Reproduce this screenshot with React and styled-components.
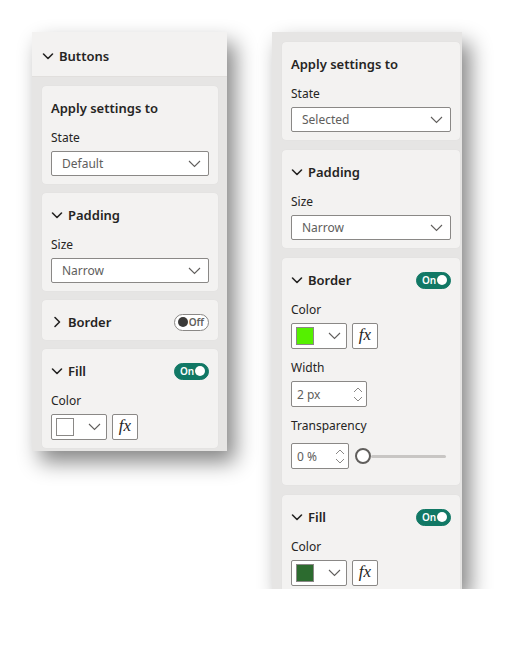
import React from "react";
import styled, { createGlobalStyle } from "styled-components";

const Global = createGlobalStyle`
  html, body {
    margin: 0;
    background: #ffffff;
    font-family: "Segoe UI", "Noto Sans", "Open Sans", sans-serif;
    color: #252423;
  }
`;

const Page = styled.div`
  display: flex;
  align-items: flex-start;
  gap: 45px;
  padding: 32px 0 0 32px;
`;

const Panel = styled.div`
  width: ${(p) => p.$width}px;
  height: ${(p) => p.$height}px;
  overflow: hidden;
  background: #e6e5e4;
  box-shadow: 8px 11px 20px rgba(0, 0, 0, 0.48);
  display: flex;
  flex-direction: column;
  gap: ${(p) => p.$gap}px;
  padding: ${(p) => (p.$header ? "0" : "10px")} ${(p) => p.$right}px 0 10px;
  box-sizing: border-box;
`;

const PanelHeader = styled.div`
  margin: 0 -${(p) => p.$right}px 0 -10px;
  height: 45px;
  background: #f3f2f1;
  border-bottom: 1px solid #e1dfdd;
  box-sizing: border-box;
  display: flex;
  align-items: center;
  gap: 5px;
  padding: 3px 0 0 10px;
  font-size: 13px;
  font-weight: 600;
  flex-shrink: 0;
`;

const Card = styled.div`
  background: #f3f2f1;
  border-radius: 4px;
  padding: 12px 9px 8px 9px;
  display: flex;
  flex-direction: column;
  flex-shrink: 0;
  box-shadow: 0 0 1px rgba(0, 0, 0, 0.08);
`;

const TitleRow = styled.div`
  height: 20px;
  display: flex;
  align-items: center;
  gap: 5px;
  font-size: 13px;
  font-weight: 600;
`;

const TitleText = styled.span`
  flex: 1;
`;

const Label = styled.div`
  font-size: 12px;
  line-height: 18px;
  margin-top: ${(p) => p.$top ?? 11}px;
  margin-bottom: ${(p) => p.$bottom ?? 4}px;
`;

const Dropdown = styled.div`
  height: 25px;
  box-sizing: border-box;
  border: 1px solid #8a8886;
  border-radius: 2px;
  background: #ffffff;
  display: flex;
  align-items: center;
  justify-content: space-between;
  padding: 0 7px 0 10px;
  font-size: 12px;
  color: #605e5c;
`;

const Row = styled.div`
  display: flex;
  align-items: center;
  gap: 5px;
  margin-bottom: ${(p) => p.$bottom ?? 0}px;
`;

const ColorBox = styled.div`
  width: 56px;
  height: 26px;
  box-sizing: border-box;
  border: 1px solid #8a8886;
  border-radius: 2px;
  background: #ffffff;
  display: flex;
  align-items: center;
  justify-content: space-between;
  padding: 0 5px 0 4px;
`;

const Swatch = styled.div`
  width: 16px;
  height: 16px;
  background: ${(p) => p.$color};
  border: 1px solid #8a8886;
`;

const FxButton = styled.div`
  width: 26px;
  height: 26px;
  box-sizing: border-box;
  border: 1px solid #8a8886;
  border-radius: 2px;
  background: #ffffff;
  display: flex;
  align-items: center;
  justify-content: center;
  font-family: "Liberation Serif", "DejaVu Serif", serif;
  font-style: italic;
  font-size: 17px;
  color: #252423;
  padding-bottom: 2px;
`;

const Spin = styled.div`
  width: ${(p) => p.$width}px;
  height: 26px;
  box-sizing: border-box;
  border: 1px solid #8a8886;
  border-radius: 2px;
  background: #ffffff;
  display: flex;
  align-items: center;
  justify-content: space-between;
  padding: 0 3px 0 5px;
  font-size: 12px;
  color: #605e5c;
`;

const Arrows = styled.div`
  display: flex;
  flex-direction: column;
  gap: 3px;
`;

const Slider = styled.div`
  flex: 1;
  display: flex;
  align-items: center;
  margin-left: 1px;
  margin-right: 5px;
`;

const Thumb = styled.div`
  width: 12px;
  height: 12px;
  border-radius: 50%;
  border: 2px solid #605e5c;
  background: #ffffff;
  flex-shrink: 0;
`;

const Track = styled.div`
  flex: 1;
  height: 3px;
  background: #c8c6c4;
  border-radius: 2px;
`;

const Toggle = styled.div`
  width: 35px;
  height: 17px;
  box-sizing: border-box;
  border-radius: 9px;
  display: flex;
  align-items: center;
  justify-content: space-between;
  font-size: 10px;
  font-weight: 600;
  background: ${(p) => (p.$on ? "#117865" : "#ffffff")};
  color: ${(p) => (p.$on ? "#ffffff" : "#605e5c")};
  border: 1px solid ${(p) => (p.$on ? "#117865" : "#8a8886")};
  flex-direction: ${(p) => (p.$on ? "row" : "row-reverse")};
  padding: ${(p) => (p.$on ? "0 3px 0 5px" : "0 4px 0 3px")};
`;

const Knob = styled.div`
  width: 10px;
  height: 10px;
  border-radius: 50%;
  background: ${(p) => (p.$on ? "#ffffff" : "#3b3a39")};
`;

const Chevron = ({ dir = "down", size = 12, color = "#252423", w = 1.6 }) => (
  <svg width={size} height={size} viewBox="0 0 12 12">
    {dir === "down" ? (
      <path d="M1.5 4 L6 8.5 L10.5 4" fill="none" stroke={color} strokeWidth={w} strokeLinecap="round" strokeLinejoin="round" />
    ) : (
      <path d="M4 1.5 L8.5 6 L4 10.5" fill="none" stroke={color} strokeWidth={w} strokeLinecap="round" strokeLinejoin="round" />
    )}
  </svg>
);

const DropChevron = () => (
  <svg width="13" height="8" viewBox="0 0 13 8">
    <path d="M1 1 L6.5 6.5 L12 1" fill="none" stroke="#605e5c" strokeWidth="1.1" />
  </svg>
);

const SpinArrows = () => (
  <Arrows>
    <svg width="10" height="6" viewBox="0 0 10 6">
      <path d="M1 5 L5 1 L9 5" fill="none" stroke="#8a8886" strokeWidth="1" />
    </svg>
    <svg width="10" height="6" viewBox="0 0 10 6">
      <path d="M1 1 L5 5 L9 1" fill="none" stroke="#8a8886" strokeWidth="1" />
    </svg>
  </Arrows>
);

const Switch = ({ on }) => (
  <Toggle $on={on}>
    <span>{on ? "On" : "Off"}</span>
    <Knob $on={on} />
  </Toggle>
);

const Select = ({ value }) => (
  <Dropdown>
    <span>{value}</span>
    <DropChevron />
  </Dropdown>
);

const ColorPicker = ({ color }) => (
  <Row>
    <ColorBox>
      <Swatch $color={color} />
      <DropChevron />
    </ColorBox>
    <FxButton>fx</FxButton>
  </Row>
);

const Section = ({ title, open = true, toggle, children }) => (
  <Card>
    <TitleRow>
      <Chevron dir={open ? "down" : "right"} />
      <TitleText>{title}</TitleText>
      {toggle !== undefined && <Switch on={toggle} />}
    </TitleRow>
    {open && children}
  </Card>
);

const ApplyCard = ({ state }) => (
  <Card>
    <TitleRow>
      <TitleText>Apply settings to</TitleText>
    </TitleRow>
    <Label>State</Label>
    <Select value={state} />
  </Card>
);

export default function App() {
  return (
    <>
      <Global />
      <Page>
        <Panel $width={195} $height={419} $right={9} $gap={9} $header>
          <PanelHeader $right={9}>
            <Chevron />
            <span>Buttons</span>
          </PanelHeader>
          <ApplyCard state="Default" />
          <Section title="Padding">
            <Label>Size</Label>
            <Select value="Narrow" />
          </Section>
          <Section title="Border" open={false} toggle={false} />
          <Section title="Fill" toggle={true}>
            <Label>Color</Label>
            <ColorPicker color="#ffffff" />
          </Section>
        </Panel>

        <Panel $width={190} $height={557} $right={2} $gap={10}>
          <ApplyCard state="Selected" />
          <Section title="Padding">
            <Label>Size</Label>
            <Select value="Narrow" />
          </Section>
          <Section title="Border" toggle={true}>
            <Label>Color</Label>
            <ColorPicker color="#55f000" />
            <Label $top={10}>Width</Label>
            <Spin $width={76}>
              <span>2 px</span>
              <SpinArrows />
            </Spin>
            <Label $top={10} $bottom={8}>Transparency</Label>
            <Row $bottom={8}>
              <Spin $width={58}>
                <span>0 %</span>
                <SpinArrows />
              </Spin>
              <Slider>
                <Thumb />
                <Track />
              </Slider>
            </Row>
          </Section>
          <Section title="Fill" toggle={true}>
            <Label>Color</Label>
            <ColorPicker color="#2c6b2f" />
          </Section>
        </Panel>
      </Page>
    </>
  );
}
